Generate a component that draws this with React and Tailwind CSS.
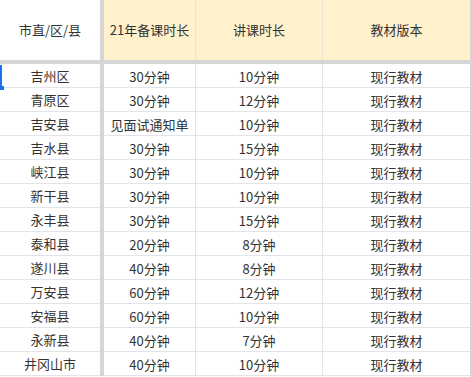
import React from 'react'

const rows = [
  ['吉州区', '30分钟', '10分钟', '现行教材'],
  ['青原区', '30分钟', '12分钟', '现行教材'],
  ['吉安县', '见面试通知单', '10分钟', '现行教材'],
  ['吉水县', '30分钟', '15分钟', '现行教材'],
  ['峡江县', '30分钟', '10分钟', '现行教材'],
  ['新干县', '30分钟', '10分钟', '现行教材'],
  ['永丰县', '30分钟', '15分钟', '现行教材'],
  ['泰和县', '20分钟', '8分钟', '现行教材'],
  ['遂川县', '40分钟', '8分钟', '现行教材'],
  ['万安县', '60分钟', '12分钟', '现行教材'],
  ['安福县', '60分钟', '10分钟', '现行教材'],
  ['永新县', '40分钟', '7分钟', '现行教材'],
  ['井冈山市', '40分钟', '10分钟', '现行教材'],
]

const font = { fontFamily: '"Microsoft YaHei", "Noto Sans CJK SC", sans-serif' }

export default function App() {
  return (
    <div className="relative w-[471px] h-[377px] overflow-hidden bg-white text-[13px] text-[#333]" style={font}>
      {/* header */}
      <div className="flex h-[60px]">
        <div className="w-[100px] flex items-center justify-center bg-white">市直/区/县</div>
        <div className="w-[4px] bg-[#d6d6d6]" />
        <div className="w-[92px] flex items-center justify-center bg-[#fff1cc] border-r border-[#e8e2d2]">21年备课时长</div>
        <div className="w-[127px] flex items-center justify-center bg-[#fff1cc] border-r border-[#e8e2d2]">讲课时长</div>
        <div className="w-[147px] flex items-center justify-center bg-[#fff1cc]">教材版本</div>
        <div className="w-[1px] bg-[#d6d6d6]" />
      </div>
      <div className="h-[4px] bg-[#d6d6d6]" />

      {rows.map((r, i) => (
        <div key={i} className="flex h-[24px]">
          <div className="w-[100px] flex items-center justify-center border-b border-[#e3e3ea] pt-[1px]">{r[0]}</div>
          <div className="w-[4px] bg-[#d6d6d6]" />
          <div className="w-[92px] flex items-center justify-center border-b border-r border-[#e3e3ea] pt-[2px]">{r[1]}</div>
          <div className="w-[127px] flex items-center justify-center border-b border-r border-[#e3e3ea] pt-[2px]">{r[2]}</div>
          <div className="w-[147px] flex items-center justify-center border-b border-[#e3e3ea] pt-[2px]">{r[3]}</div>
          <div className="w-[1px] bg-[#d6d6d6]" />
        </div>
      ))}

      {/* selection cue at left edge */}
      <div className="absolute left-0 top-[65px] w-[2px] h-[22px] bg-[#1a73e8]" />
      <div className="absolute left-0 top-[86px] w-[4px] h-[4px] bg-[#1a73e8]" />
    </div>
  )
}
